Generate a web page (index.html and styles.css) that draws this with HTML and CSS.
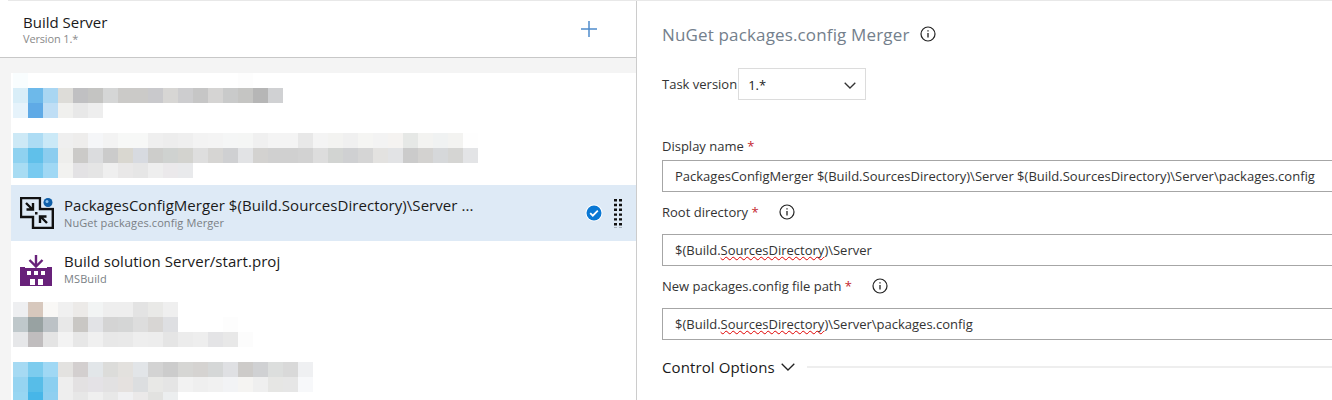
FILE: index.html
```html
<!DOCTYPE html>
<html lang="en">
<head>
  <meta charset="UTF-8">
  <title>Build Server</title>
  <link rel="stylesheet" href="styles.css">
</head>
<body>
  <div class="top-edge"></div>
  <div class="page">
    <div class="left">
      <div class="phase-head">
        <div>
          <div class="phase-name">Build Server</div>
          <div class="phase-version">Version 1.*</div>
        </div>
        <svg class="add" width="16" height="16" viewBox="0 0 16 16"><path d="M8 0v16M0 8h16" stroke="#4f8ccb" stroke-width="1.5" fill="none"/></svg>
      </div>
      <div class="task-list">
        <div class="task blurred blur-1">
          <svg class="mosaic" width="285" height="45">
            <rect x="0" y="0" fill="#f9fdfe"/><rect x="225" y="0" fill="#fdfdfd"/>
            <rect x="0" y="15" fill="#d9eef8"/><rect x="15" y="15" fill="#6db9ea"/><rect x="30" y="15" fill="#a9d6f2"/><rect x="45" y="15" fill="#dddcd8"/><rect x="60" y="15" fill="#c0c0c2"/><rect x="75" y="15" fill="#c4c4c2"/><rect x="90" y="15" fill="#d5d6d6"/><rect x="105" y="15" fill="#cbcac8"/><rect x="120" y="15" fill="#cbcac8"/><rect x="135" y="15" fill="#c9c9cc"/><rect x="150" y="15" fill="#d7d6d4"/><rect x="165" y="15" fill="#cdcdcf"/><rect x="180" y="15" fill="#c6c6c6"/><rect x="195" y="15" fill="#d5d4d3"/><rect x="210" y="15" fill="#c9caca"/><rect x="225" y="15" fill="#c5c5c3"/><rect x="240" y="15" fill="#b6b6b6"/><rect x="255" y="15" fill="#d0d1d3"/>
            <rect x="0" y="30" fill="#e6f3fb"/><rect x="15" y="30" fill="#5faae6"/><rect x="30" y="30" fill="#bfdef5"/><rect x="45" y="30" fill="#f0f0ee"/><rect x="60" y="30" fill="#e8e8e8"/><rect x="75" y="30" fill="#eeeeee"/>
          </svg>
        </div>
        <div class="task blurred blur-2">
          <svg class="mosaic" width="465" height="45">
            <rect x="0" y="0" fill="#cde9f6"/><rect x="15" y="0" fill="#addcf4"/><rect x="30" y="0" fill="#cbe9f7"/><rect x="45" y="0" fill="#efefef"/><rect x="60" y="0" fill="#eeedec"/><rect x="75" y="0" fill="#f5f6f8"/><rect x="90" y="0" fill="#f3f3f3"/><rect x="105" y="0" fill="#f7f8f7"/><rect x="120" y="0" fill="#f7f8f7"/><rect x="135" y="0" fill="#efefef"/><rect x="150" y="0" fill="#ededed"/><rect x="165" y="0" fill="#efefef"/><rect x="180" y="0" fill="#f3f3f3"/><rect x="195" y="0" fill="#f4f4f4"/><rect x="210" y="0" fill="#f5f6f6"/><rect x="225" y="0" fill="#f5f6f5"/><rect x="240" y="0" fill="#f0f0f0"/><rect x="255" y="0" fill="#f4f4f4"/><rect x="270" y="0" fill="#f4f4f4"/><rect x="285" y="0" fill="#e8e8e8"/><rect x="300" y="0" fill="#f4f4f4"/><rect x="315" y="0" fill="#f3f3f1"/><rect x="330" y="0" fill="#f0f0f0"/><rect x="345" y="0" fill="#f5f5f3"/><rect x="360" y="0" fill="#f3f3f3"/><rect x="375" y="0" fill="#f5f3f1"/><rect x="390" y="0" fill="#e6e8e6"/><rect x="405" y="0" fill="#f3f3f1"/><rect x="420" y="0" fill="#f0f2f2"/><rect x="435" y="0" fill="#f3f3f1"/><rect x="450" y="0" fill="#fefefe"/>
            <rect x="0" y="15" fill="#8fd2f0"/><rect x="15" y="15" fill="#60c0ea"/><rect x="30" y="15" fill="#8ccdef"/><rect x="45" y="15" fill="#eeeeec"/><rect x="60" y="15" fill="#cbcac8"/><rect x="75" y="15" fill="#dbdcde"/><rect x="90" y="15" fill="#cbcbcb"/><rect x="105" y="15" fill="#d9d7d0"/><rect x="120" y="15" fill="#d7dae0"/><rect x="135" y="15" fill="#cdcdcb"/><rect x="150" y="15" fill="#cfd2d0"/><rect x="165" y="15" fill="#d3d3cf"/><rect x="180" y="15" fill="#dedede"/><rect x="195" y="15" fill="#d6d5d3"/><rect x="210" y="15" fill="#cfd0d2"/><rect x="225" y="15" fill="#e2e3e5"/><rect x="240" y="15" fill="#d3d2d0"/><rect x="255" y="15" fill="#d0d0d0"/><rect x="270" y="15" fill="#d0d0d0"/><rect x="285" y="15" fill="#d2d2d2"/><rect x="300" y="15" fill="#dddddd"/><rect x="315" y="15" fill="#d2d4d2"/><rect x="330" y="15" fill="#cfd0d2"/><rect x="345" y="15" fill="#d5d5d5"/><rect x="360" y="15" fill="#e3e2e0"/><rect x="375" y="15" fill="#e2e3e5"/><rect x="390" y="15" fill="#cbcbcb"/><rect x="405" y="15" fill="#d3d2d0"/><rect x="420" y="15" fill="#d6d8da"/><rect x="435" y="15" fill="#d5d5d3"/><rect x="450" y="15" fill="#e3e4e6"/>
            <rect x="0" y="30" fill="#a8dcf3"/><rect x="15" y="30" fill="#78caf0"/><rect x="30" y="30" fill="#a0d8f4"/><rect x="45" y="30" fill="#f2f2f0"/><rect x="60" y="30" fill="#e3e2e4"/><rect x="75" y="30" fill="#e5e5e5"/><rect x="90" y="30" fill="#efefef"/><rect x="105" y="30" fill="#e9e8e8"/><rect x="120" y="30" fill="#e6e6e6"/><rect x="135" y="30" fill="#eeeeee"/><rect x="150" y="30" fill="#ebe9eb"/><rect x="165" y="30" fill="#e9eaec"/>
          </svg>
        </div>
        <div class="task selected">
          <svg class="task-icon" width="34" height="32" viewBox="0 0 34 32">
            <path d="M1 1H20V12H32.8V31H13V20H1Z" fill="none" stroke="#111" stroke-width="2.4"/>
            <path d="M6 6l6 6M13 6v6.500H6.500" fill="none" stroke="#111" stroke-width="2.4"/>
            <path d="M27 26l-6-6M20 26v-6.500h6.500" fill="none" stroke="#111" stroke-width="2.4"/>
            <rect x="15" y="15" width="2.500" height="2.500" fill="#111"/>
            <rect x="21.500" y="0" width="12.500" height="10.500" fill="#deeaf6"/>
            <circle cx="28" cy="5.500" r="4.500" fill="#0f5fa8"/>
            <circle cx="27" cy="4.500" r="1.500" fill="#8ec4ee"/>
          </svg>
          <div class="task-text">
            <div class="task-name">PackagesConfigMerger $(Build.SourcesDirectory)\Server ...</div>
            <div class="task-sub">NuGet packages.config Merger</div>
          </div>
          <svg class="check" width="18" height="18" viewBox="0 0 18 18">
            <circle cx="9" cy="9" r="8.500" fill="#fff"/>
            <circle cx="9" cy="9" r="7.500" fill="#0a78d4"/>
            <path d="M5.200 9.200l2.600 2.500 5-5" fill="none" stroke="#fff" stroke-width="1.800"/>
          </svg>
          <svg class="grip" width="8" height="29" viewBox="0 0 8 29">
            <path d="M1.500 0v29M6.500 0v29" stroke="#111" stroke-width="3" stroke-dasharray="2.400 2.400" fill="none"/>
          </svg>
        </div>
        <div class="task">
          <svg class="task-icon build-icon" width="34" height="32" viewBox="0 0 34 32">
            <path d="M9.500 6L16 12.500 22.500 6M16 1v11" fill="none" stroke="#68217a" stroke-width="2.400"/>
            <path d="M0 13h5v1h22v-1h5v19H0z" fill="#68217a"/>
            <path d="M7 17h4v4H7zM14 17h4v4h-4zM21 17h4v4h-4zM10 25h5v6h-5zM18 25h5v6h-5z" fill="#fff"/>
          </svg>
          <div class="task-text">
            <div class="task-name">Build solution Server/start.proj</div>
            <div class="task-sub">MSBuild</div>
          </div>
        </div>
        <div class="task blurred blur-3">
          <svg class="mosaic" width="240" height="45">
            <rect x="0" y="0" fill="#eeeff1"/><rect x="15" y="0" fill="#d7c8bd"/><rect x="30" y="0" fill="#f9f8f6"/><rect x="45" y="0" fill="#f0f0f0"/><rect x="60" y="0" fill="#eceae8"/><rect x="75" y="0" fill="#f2f4f4"/><rect x="90" y="0" fill="#eeeeee"/><rect x="105" y="0" fill="#eeeeee"/><rect x="120" y="0" fill="#e3e3e3"/><rect x="135" y="0" fill="#e9e9e7"/><rect x="150" y="0" fill="#efefef"/>
            <rect x="0" y="15" fill="#bfc8cb"/><rect x="15" y="15" fill="#98a2a2"/><rect x="30" y="15" fill="#bcc2c6"/><rect x="45" y="15" fill="#e8e8e8"/><rect x="60" y="15" fill="#c9c7c4"/><rect x="75" y="15" fill="#e2e3e6"/><rect x="90" y="15" fill="#d4d4d4"/><rect x="105" y="15" fill="#d5d6d6"/><rect x="120" y="15" fill="#dddddd"/><rect x="135" y="15" fill="#d8d6d4"/><rect x="150" y="15" fill="#dedfe2"/><rect x="210" y="15" fill="#fdfdfd"/>
            <rect x="0" y="30" fill="#e6e7e9"/><rect x="15" y="30" fill="#c0bdbe"/><rect x="30" y="30" fill="#e4e4e4"/><rect x="45" y="30" fill="#f3f3f3"/><rect x="60" y="30" fill="#e7e7e7"/><rect x="75" y="30" fill="#f0f0f0"/><rect x="90" y="30" fill="#e8e8e8"/><rect x="105" y="30" fill="#e9e9e9"/><rect x="120" y="30" fill="#eeeeee"/><rect x="135" y="30" fill="#ededed"/><rect x="150" y="30" fill="#e5e5e5"/><rect x="165" y="30" fill="#ececec"/><rect x="180" y="30" fill="#eeeeee"/><rect x="195" y="30" fill="#e4e4e6"/><rect x="210" y="30" fill="#e8e8e8"/><rect x="225" y="30" fill="#fcfcfc"/>
          </svg>
        </div>
        <div class="task blurred blur-4">
          <svg class="mosaic" width="300" height="45">
            <rect x="0" y="0" fill="#a6daf3"/><rect x="15" y="0" fill="#7dccee"/><rect x="30" y="0" fill="#a0d8f4"/><rect x="45" y="0" fill="#e3e2e0"/><rect x="60" y="0" fill="#d3cfcf"/><rect x="75" y="0" fill="#e2e6e9"/><rect x="90" y="0" fill="#dcdcda"/><rect x="105" y="0" fill="#e3e1de"/><rect x="120" y="0" fill="#e2e5e8"/><rect x="135" y="0" fill="#d3d3d3"/><rect x="150" y="0" fill="#cccccc"/><rect x="165" y="0" fill="#d6d6d4"/><rect x="180" y="0" fill="#d5d3d1"/><rect x="195" y="0" fill="#d5d7d7"/><rect x="210" y="0" fill="#dfe0e3"/><rect x="225" y="0" fill="#cdcbc9"/><rect x="240" y="0" fill="#d0d1d3"/><rect x="255" y="0" fill="#dcdedd"/><rect x="270" y="0" fill="#d9d9d9"/><rect x="285" y="0" fill="#eff0f2"/>
            <rect x="0" y="15" fill="#96d4f1"/><rect x="15" y="15" fill="#57bde8"/><rect x="30" y="15" fill="#8bcff0"/><rect x="45" y="15" fill="#eeeeee"/><rect x="60" y="15" fill="#e3e1e2"/><rect x="75" y="15" fill="#e4e2e6"/><rect x="90" y="15" fill="#e2e1e2"/><rect x="105" y="15" fill="#e5e1df"/><rect x="120" y="15" fill="#dcdee0"/><rect x="135" y="15" fill="#e8e8e6"/><rect x="150" y="15" fill="#e5e5e5"/><rect x="165" y="15" fill="#f2f2f2"/><rect x="180" y="15" fill="#efefef"/><rect x="195" y="15" fill="#f1f1f1"/><rect x="210" y="15" fill="#f2f3f5"/><rect x="225" y="15" fill="#f5f4f2"/><rect x="240" y="15" fill="#efefef"/><rect x="255" y="15" fill="#e6e6e4"/><rect x="270" y="15" fill="#e6e6e6"/><rect x="285" y="15" fill="#f7f8fa"/>
            <rect x="0" y="30" fill="#98d6f2"/><rect x="15" y="30" fill="#47b6e8"/><rect x="30" y="30" fill="#8fcff0"/><rect x="45" y="30" fill="#eeeeee"/><rect x="60" y="30" fill="#e7e7e7"/><rect x="75" y="30" fill="#efefef"/><rect x="90" y="30" fill="#e8e8e8"/><rect x="105" y="30" fill="#f0f0f2"/><rect x="120" y="30" fill="#ebe9e9"/><rect x="135" y="30" fill="#e2e2e0"/><rect x="150" y="30" fill="#eceeef"/>
          </svg>
        </div>
      </div>
    </div>

    <div class="right">
      <div class="title-row">
        <h2 class="title">NuGet packages.config Merger</h2>
        <svg class="info" width="16" height="16" viewBox="0 0 16 16"><circle cx="8" cy="8" r="7" fill="none" stroke="#222" stroke-width="1.200"/><path d="M8 7v4.500M8 4.200v1.400" stroke="#222" stroke-width="1.300"/></svg>
      </div>
      <div class="version-row">
        <span class="label">Task version</span>
        <div class="select">
          <span>1.*</span>
          <svg width="12" height="7" viewBox="0 0 12 7"><path d="M.7.7L6 6l5.300-5.300" fill="none" stroke="#333" stroke-width="1.300"/></svg>
        </div>
      </div>
      <div class="label-row first">
        <span class="label">Display name <b class="req">*</b></span>
      </div>
      <div class="field tight">PackagesConfigMerger $(Build.SourcesDirectory)\Server $(Build.SourcesDirectory)\Server\packages.config</div>
      <div class="label-row">
        <span class="label">Root directory <b class="req">*</b></span>
        <svg class="info gap-root" width="16" height="16" viewBox="0 0 16 16"><circle cx="8" cy="8" r="7" fill="none" stroke="#222" stroke-width="1.200"/><path d="M8 7v4.500M8 4.200v1.400" stroke="#222" stroke-width="1.300"/></svg>
      </div>
      <div class="field">$(Build.<span class="spell">SourcesDirectory</span>)\Server</div>
      <div class="label-row">
        <span class="label">New packages.config file path <b class="req">*</b></span>
        <svg class="info gap-root" width="16" height="16" viewBox="0 0 16 16"><circle cx="8" cy="8" r="7" fill="none" stroke="#222" stroke-width="1.200"/><path d="M8 7v4.500M8 4.200v1.400" stroke="#222" stroke-width="1.300"/></svg>
      </div>
      <div class="field">$(Build.<span class="spell">SourcesDirectory</span>)\Server\packages.config</div>
      <div class="section">
        <span class="section-name">Control Options</span>
        <svg width="14" height="8" viewBox="0 0 14 8"><path d="M.7.7L7 7l6.300-6.300" fill="none" stroke="#222" stroke-width="1.300"/></svg>
        <div class="section-line"></div>
      </div>
    </div>
  </div>
</body>
</html>
```

FILE: styles.css
```css
html, body {
  margin: 0;
  height: 400px;
  overflow: hidden;
  background: #fff;
}
body {
  font-family: "Open Sans", "Noto Sans", sans-serif;
  color: #222;
}
.top-edge {
  height: 1px;
  margin-left: 8px;
  background: #e8e8e8;
}
.page {
  display: flex;
  height: 399px;
}

/* left side */
.left {
  width: 636px;
  flex: none;
  border-right: 1px solid #ccc;
  background: #f4f4f4;
}
.phase-head {
  height: 57px;
  box-sizing: border-box;
  display: flex;
  align-items: center;
  justify-content: space-between;
  padding: 0 39px 0 23px;
  background: #fff;
  border-bottom: 1px solid #c8c8c8;
}
.phase-name {
  font-size: 15px;
  line-height: 20px;
  color: #1a1a1a;
}
.phase-version {
  font-size: 11px;
  line-height: 14px;
  letter-spacing: -0.15px;
  color: #8a8a8a;
}
.task-list {
  margin-top: 15px;
  margin-left: 11px;
  background: #fff;
}
.task {
  height: 56px;
  display: flex;
  align-items: center;
  padding-left: 9px;
  overflow: hidden;
}
.task.selected {
  background: #deeaf6;
}
.task-icon {
  flex: none;
}
.build-icon {
  margin-top: 2px;
}
.task-text {
  flex: 1;
  margin-left: 10px;
  padding-bottom: 1px;
}
.task-name {
  font-size: 15px;
  line-height: 20px;
  letter-spacing: 0.05px;
  color: #1a1a1a;
  margin-bottom: 1px;
}
.task-sub {
  font-size: 11px;
  line-height: 14px;
  letter-spacing: 0.1px;
  color: #7a7f85;
}
.check {
  margin-right: 11px;
}
.grip {
  margin-right: 14px;
}

/* pixelated rows */
.blurred {
  align-items: flex-start;
  padding-left: 2px;
}
.mosaic {
  display: block;
  shape-rendering: crispEdges;
}
.mosaic rect {
  width: 15px;
  height: 15px;
}
.blur-2 .mosaic {
  margin-top: 4px;
}
.blur-3 .mosaic {
  margin-top: 5px;
}
.blur-4 .mosaic {
  margin-top: 9px;
}

/* right side */
.right {
  flex: 1;
  min-width: 0;
  padding-left: 25px;
}
.title-row {
  display: flex;
  align-items: center;
  height: 22px;
  margin-top: 22px;
}
.title {
  margin: 0;
  font-size: 17px;
  font-weight: 400;
  letter-spacing: 0.15px;
  color: #74808c;
}
.info {
  flex: none;
  margin-left: 11px;
}
.label {
  font-size: 13px;
  color: #333;
  white-space: nowrap;
}
.req {
  font-weight: 400;
  color: #c4262e;
}
.version-row {
  display: flex;
  align-items: center;
  gap: 1px;
  margin-top: 23px;
}
.select {
  width: 128px;
  height: 32px;
  box-sizing: border-box;
  display: flex;
  align-items: center;
  justify-content: space-between;
  padding: 2px 9px 0 9px;
  border: 1px solid #dcdcdc;
  font-size: 13px;
}
.label-row {
  display: flex;
  align-items: center;
  height: 18px;
  margin-top: 11px;
  margin-bottom: 13px;
}
.label-row.first {
  margin-top: 37px;
  margin-bottom: 5px;
}
.gap-root {
  margin-left: 20px;
}
.field {
  height: 32px;
  box-sizing: border-box;
  line-height: 30px;
  padding-left: 12px;
  border: 1px solid #a6a6a6;
  border-right: none;
  font-size: 13px;
  color: #333;
  white-space: nowrap;
  overflow: hidden;
}
.spell {
  text-decoration: underline wavy #e00000 1px;
  text-decoration-skip-ink: none;
}
.section {
  display: flex;
  align-items: center;
  height: 20px;
  margin-top: 17px;
}
.section-name {
  font-size: 15px;
  letter-spacing: 0.1px;
  color: #1a1a1a;
  margin-right: 6px;
}
.section-line {
  flex: 1;
  height: 2px;
  margin-left: 12px;
  background: #eee;
}
```
